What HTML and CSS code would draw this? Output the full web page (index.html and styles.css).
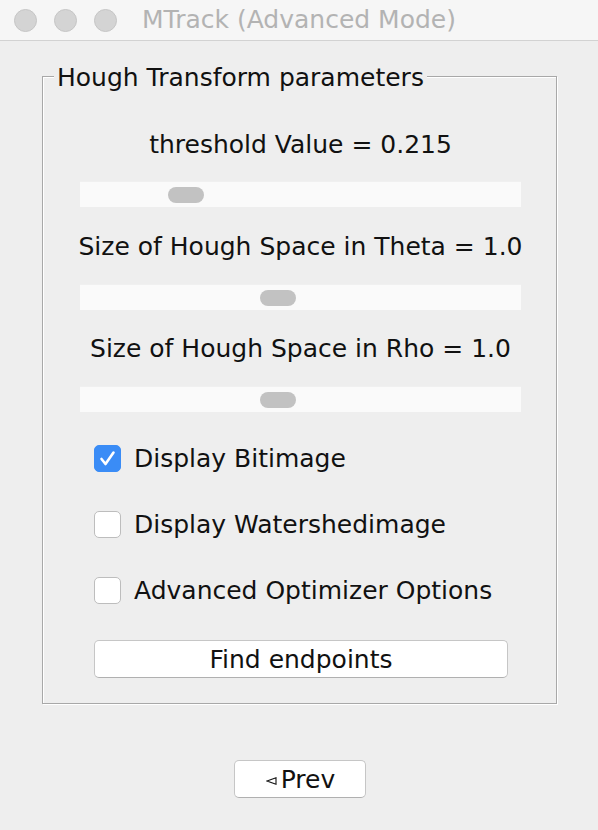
FILE: index.html
```html
<!DOCTYPE html>
<html>
<head>
<meta charset="utf-8">
<link rel="stylesheet" href="styles.css">
</head>
<body>
<div class="window">
  <div class="titlebar">
    <div class="lights">
      <span class="light"></span><span class="light"></span><span class="light"></span>
    </div>
    <div class="title">MTrack (Advanced Mode)</div>
  </div>
  <div class="content">
    <div class="group">
      <span class="legend">Hough Transform parameters</span>
      <div class="label first">threshold Value = 0.215</div>
      <div class="slider"><span class="thumb" style="margin-left:88px"></span></div>
      <div class="label">Size of Hough Space in Theta = 1.0</div>
      <div class="slider s2"><span class="thumb" style="margin-left:180px"></span></div>
      <div class="label l3">Size of Hough Space in Rho = 1.0</div>
      <div class="slider s2"><span class="thumb" style="margin-left:180px"></span></div>
      <div class="check first-check">
        <span class="box checked">
          <svg width="27" height="27" viewBox="0 0 27 27"><path d="M7.5 14 L11.5 19 L19.5 7.5" fill="none" stroke="#fff" stroke-width="2.6" stroke-linecap="round" stroke-linejoin="round"/></svg>
        </span>
        <span class="ctext">Display Bitimage</span>
      </div>
      <div class="check">
        <span class="box"></span>
        <span class="ctext">Display Watershedimage</span>
      </div>
      <div class="check">
        <span class="box"></span>
        <span class="ctext">Advanced Optimizer Options</span>
      </div>
      <div class="btn wide">Find endpoints</div>
    </div>
    <div class="footer">
      <div class="btn prev"><svg class="tri" width="11" height="8" viewBox="0 0 11 8"><path d="M1 4 L10 0.8 L10 7.2 Z" fill="none" stroke="#111" stroke-width="1.1" stroke-linejoin="miter"/></svg>Prev</div>
    </div>
  </div>
</div>
</body>
</html>
```

FILE: styles.css
```css
html, body {
  margin: 0;
  padding: 0;
  background: #eeeeee;
}
body {
  width: 598px;
  height: 830px;
  overflow: hidden;
  font-family: "DejaVu Sans", "Liberation Sans", sans-serif;
  color: #111;
}
.titlebar {
  height: 40px;
  background: #f6f6f6;
  border-bottom: 1px solid #d2d2d2;
  display: flex;
  align-items: center;
  position: relative;
}
.lights {
  display: flex;
  gap: 17px;
  padding-left: 14px;
}
.light {
  width: 21px;
  height: 21px;
  border-radius: 50%;
  background: #d4d4d4;
  border: 1px solid #c6c6c6;
}
.title {
  position: absolute;
  left: 0;
  right: 0;
  text-align: center;
  font-size: 25px;
  color: #b3b3b3;
  line-height: 40px;
}
.content {
  padding: 35px 41px 0 42px;
}
.group {
  position: relative;
  border: 1px solid #a8a8a8;
  box-shadow: inset 1px 1px 0 #ffffff, 1px 1px 0 #ffffff;
  padding: 53px 35px 25px 37px;
}
.legend {
  position: absolute;
  top: -14px;
  left: 11px;
  padding: 0 3px;
  background: #eeeeee;
  font-size: 25px;
  line-height: 30px;
}
.label {
  text-align: center;
  font-size: 25px;
  line-height: 30px;
  margin: 25px -20px 0 -20px;
  white-space: nowrap;
}
.label.first {
  margin-top: 0;
}
.label.l3 {
  margin-top: 24px;
}
.slider {
  height: 26px;
  margin-top: 21px;
  background: #fafafa;
  border-top: 1px solid #f0f0f0;
  box-sizing: border-box;
  display: flex;
  align-items: center;
}
.slider.s2 {
  margin-top: 22px;
}
.thumb {
  width: 36px;
  height: 16px;
  border-radius: 8px;
  background: #c2c2c2;
}
.check {
  display: flex;
  align-items: center;
  height: 30px;
  margin-top: 36px;
  padding-left: 14px;
}
.check.first-check {
  margin-top: 31px;
}
.box {
  width: 27px;
  height: 27px;
  box-sizing: border-box;
  border-radius: 5px;
  background: #ffffff;
  border: 1px solid #bdbdbd;
  flex: none;
  display: flex;
}
.box.checked {
  background: #3a8cf6;
  border-color: #3a8cf6;
}
.box svg {
  margin: -1px;
}
.ctext {
  font-size: 25px;
  margin-left: 13px;
  white-space: nowrap;
}
.btn {
  background: #ffffff;
  border: 1px solid #c6c6c6;
  border-bottom-color: #b0b0b0;
  border-radius: 5px;
  box-sizing: border-box;
  height: 38px;
  display: flex;
  align-items: center;
  justify-content: center;
  font-size: 25px;
}
.btn.wide {
  margin: 35px 13px 0 14px;
}
.footer {
  display: flex;
  justify-content: center;
  padding-top: 56px;
}
.btn.prev {
  width: 132px;
}
.tri {
  margin-right: 4px;
  margin-left: 2px;
  margin-top: 4px;
}
```
